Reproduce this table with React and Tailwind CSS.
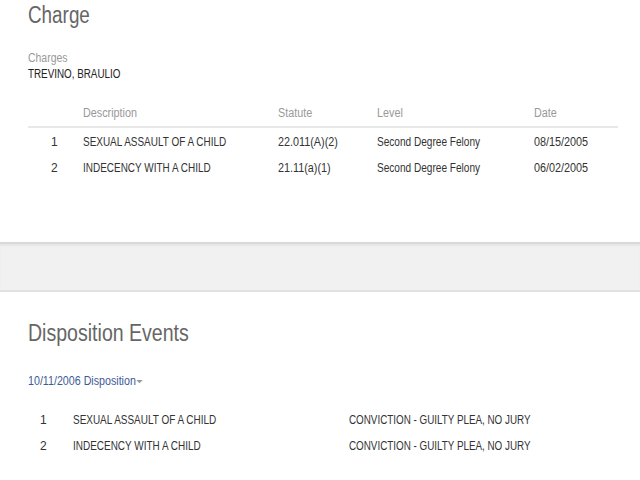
import React from 'react';

const charges = [
  { n: 1, desc: 'SEXUAL ASSAULT OF A CHILD', statute: '22.011(A)(2)', level: 'Second Degree Felony', date: '08/15/2005' },
  { n: 2, desc: 'INDECENCY WITH A CHILD', statute: '21.11(a)(1)', level: 'Second Degree Felony', date: '06/02/2005' },
];

const dispositions = [
  { n: 1, desc: 'SEXUAL ASSAULT OF A CHILD', result: 'CONVICTION - GUILTY PLEA, NO JURY' },
  { n: 2, desc: 'INDECENCY WITH A CHILD', result: 'CONVICTION - GUILTY PLEA, NO JURY' },
];

const font = { fontFamily: '"Liberation Sans", Arial, sans-serif' };

// the source page renders in a condensed face; squeeze the Arial-metric font to match
const N = ({ children, className = 'scale-x-[0.83]' }) => (
  <span className={`inline-block origin-left whitespace-nowrap ${className}`}>{children}</span>
);

export default function App() {
  return (
    <div className="w-[640px] h-[480px] overflow-hidden bg-white text-[#333]" style={font}>
      {/* Charge section */}
      <section className="px-[28px] h-[242px]">
        <h1 className="text-[23px] leading-[30px] text-[#666] font-normal">
          <N className="scale-x-[0.82]">Charge</N>
        </h1>
        <div className="mt-[20px] text-[12px] leading-[16px] text-[#999]">
          <N className="scale-x-[0.87]">Charges</N>
        </div>
        <div className="text-[12px] leading-[16px] text-[#222]">
          <N className="scale-x-[0.82]">TREVINO, BRAULIO</N>
        </div>

        <div className="mt-[23px] w-[590px]">
          <div className="grid grid-cols-[55px_195px_99px_157px_1fr] text-[12px] leading-[16px] text-[#999] pb-[5px] border-b-2 border-[#e8e8e8]">
            <span></span>
            <span><N className="scale-x-[0.9]">Description</N></span>
            <span><N className="scale-x-[0.9]">Statute</N></span>
            <span><N className="scale-x-[0.9]">Level</N></span>
            <span><N className="scale-x-[0.9]">Date</N></span>
          </div>
          {charges.map((c) => (
            <div
              key={c.n}
              className="grid grid-cols-[55px_195px_99px_157px_1fr] text-[12px] leading-[16px] text-[#333] pt-[6px] pb-[4px]"
            >
              <span className="pl-[23px]">{c.n}</span>
              <span><N>{c.desc}</N></span>
              <span><N className="scale-x-[0.9]">{c.statute}</N></span>
              <span><N className="scale-x-[0.84]">{c.level}</N></span>
              <span><N className="scale-x-[0.9]">{c.date}</N></span>
            </div>
          ))}
        </div>
      </section>

      {/* separator band */}
      <div className="h-[50px] bg-[#f1f1f1] border-t-2 border-b-2 border-t-[#d9d9d9] border-b-[#e2e2e2] shadow-[inset_0_2px_2px_rgba(0,0,0,0.05)]"></div>

      {/* Disposition section */}
      <section className="px-[28px]">
        <h2 className="mt-[26px] text-[23px] leading-[30px] text-[#666] font-normal">
          <N className="scale-x-[0.85]">Disposition Events</N>
        </h2>
        <div className="mt-[25px] flex items-center text-[12px] leading-[16px] text-[#3d5a99]">
          <span className="w-[108px]"><N className="scale-x-[0.89]">10/11/2006 Disposition</N></span>
          <svg width="7" height="4" viewBox="0 0 8 5" className="mt-[1px]">
            <path d="M0 0 L8 0 L4 4 Z" fill="#999" />
          </svg>
        </div>
        <div className="mt-[23px]">
          {dispositions.map((d) => (
            <div
              key={d.n}
              className="grid grid-cols-[45px_276px_1fr] text-[12px] leading-[16px] text-[#333] pb-[10px]"
            >
              <span className="pl-[12px]">{d.n}</span>
              <span><N>{d.desc}</N></span>
              <span><N className="scale-x-[0.82]">{d.result}</N></span>
            </div>
          ))}
        </div>
      </section>
    </div>
  );
}
